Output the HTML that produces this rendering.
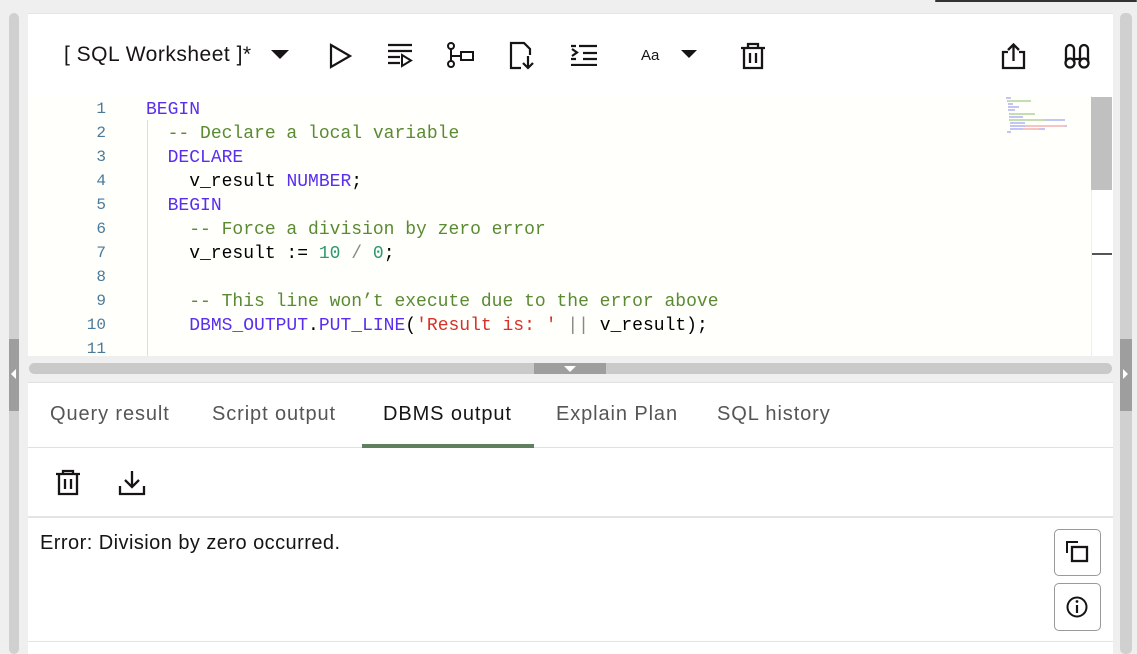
<!DOCTYPE html>
<html><head><meta charset="utf-8"><style>
*{margin:0;padding:0;box-sizing:border-box}
body{width:1137px;height:654px;background:#efefef;position:relative;overflow:hidden;font-family:"Liberation Sans",sans-serif}
.a{position:absolute}
.code{font-family:"Liberation Mono",monospace;font-size:18px;white-space:pre;color:#000}
.ln{font-family:"Liberation Mono",monospace;font-size:16px;color:#4a7a9a;width:30px;text-align:right;left:76px}
.k{color:#5a2df0}.c{color:#5a8a32}.n{color:#2e9a6e}.s{color:#d8302a}.o{color:#888}
.tab{top:403px;font-size:20px;color:#555;letter-spacing:0.9px}
svg{position:absolute}
</style></head><body>
<div class="a" style="left:935px;top:0;width:202px;height:2px;background:#333;border-radius:2px"></div>
<div class="a" style="left:9px;top:13px;width:10px;height:641px;background:#d0d0d0;border-radius:5px"></div>
<div class="a" style="left:9px;top:339px;width:10px;height:72px;background:#9e9e9e"></div>
<svg style="left:11px;top:369px" width="6" height="10"><path d="M5 0L0 5L5 10Z" fill="#fff"/></svg>
<div class="a" style="left:1120px;top:13px;width:12px;height:641px;background:#d0d0d0;border-radius:5px"></div>
<div class="a" style="left:1120px;top:339px;width:12px;height:72px;background:#9e9e9e"></div>
<svg style="left:1123px;top:369px" width="6" height="10"><path d="M0 0L5 5L0 10Z" fill="#fff"/></svg>
<div class="a" style="left:28px;top:13px;width:1085px;height:641px;background:#fff;border-top:1px solid #e4e4e4"></div>
<div class="a" style="left:64px;top:43px;font-size:21px;color:#161513;letter-spacing:0.5px">[ SQL Worksheet ]*</div>
<svg style="left:271px;top:50px" width="18" height="10"><path d="M0 0H18L9 9Z" fill="#161513"/></svg>
<svg style="left:329px;top:43px" width="24" height="26"><path d="M2 2L21 13L2 24Z" fill="none" stroke="#161513" stroke-width="2.2"/></svg>
<svg style="left:387px;top:42px" width="28" height="26"><path d="M1 3H25M1 9H25M1 15H13M1 21H13" stroke="#161513" stroke-width="2.3"/><path d="M15 13L24 18.5L15 24Z" fill="none" stroke="#161513" stroke-width="2"/></svg>
<svg style="left:446px;top:42px" width="30" height="28"><circle cx="5" cy="4" r="3" fill="none" stroke="#161513" stroke-width="2"/><circle cx="5" cy="22" r="3" fill="none" stroke="#161513" stroke-width="2"/><path d="M5 7V19M5 14H15" stroke="#161513" stroke-width="2"/><rect x="15" y="10" width="12" height="8" fill="none" stroke="#161513" stroke-width="2"/></svg>
<svg style="left:509px;top:41px" width="28" height="30"><path d="M12 27H2V2H15L21 8V14" fill="none" stroke="#161513" stroke-width="2.2"/><path d="M19 15V27M14 22L19 27L24 22" fill="none" stroke="#161513" stroke-width="2.2"/></svg>
<svg style="left:570px;top:44px" width="28" height="22"><path d="M9 2H27M13 9H27M13 15H27M1 21H27M1 2H6M1 15H6" stroke="#161513" stroke-width="2.3"/><path d="M2 5L7 8.5L2 12" fill="none" stroke="#161513" stroke-width="2.2"/></svg>
<div class="a" style="left:641px;top:47px;font-size:15px;color:#161513">Aa</div>
<svg style="left:681px;top:50px" width="16" height="9"><path d="M0 0H16L8 8Z" fill="#161513"/></svg>
<svg style="left:740px;top:42px" width="26" height="28"><path d="M1 6H25M8 6V2H18V6M4 6V26H22V6M10 11V21M16 11V21" fill="none" stroke="#161513" stroke-width="2.3"/></svg>
<svg style="left:1000px;top:42px" width="28" height="28"><path d="M8 10H3V26H24V10H19M13.5 19V3M8 8L13.5 2.5L19 8" fill="none" stroke="#161513" stroke-width="2.3"/></svg>
<svg style="left:1062px;top:42px" width="30" height="28"><path d="M4 20V7A4 4 0 0 1 12 7V20M18 20V7A4 4 0 0 1 26 7V20M12 17H18" fill="none" stroke="#161513" stroke-width="2.3"/><circle cx="8" cy="21" r="4.5" fill="none" stroke="#161513" stroke-width="2.3"/><circle cx="22" cy="21" r="4.5" fill="none" stroke="#161513" stroke-width="2.3"/></svg>
<div class="a" style="left:29px;top:96px;width:1062px;height:260px;background:#fffffc"></div>
<div class="a" style="left:147px;top:120px;width:1px;height:236px;background:#ddd"></div>
<div class="a" style="left:1091px;top:96px;width:21px;height:260px;background:#fff;border-left:1px solid #eee"></div>
<div class="a" style="left:1091px;top:97px;width:21px;height:93px;background:#c0c0c0"></div>
<div class="a" style="left:1092px;top:253px;width:20px;height:2px;background:#555"></div>
<svg style="left:1005px;top:97px" width="70" height="40"><g stroke-width="1"><path d="M1 1H6M2 4H10M3 7H8M3 10H14M3 13H10M4 17H26M4 20H18M4 23H60M5 26H20M5 29H62M5 32H40M2 35H6" stroke="#8888ee"/><path d="M3 4H26M5 17H30M5 23H40" stroke="#88bb66"/><path d="M20 29H60M18 32H34" stroke="#ee8888"/></g></svg>
<div class="a ln" style="top:100px">1</div><div class="a ln" style="top:124px">2</div><div class="a ln" style="top:148px">3</div><div class="a ln" style="top:172px">4</div><div class="a ln" style="top:196px">5</div><div class="a ln" style="top:220px">6</div><div class="a ln" style="top:244px">7</div><div class="a ln" style="top:268px">8</div><div class="a ln" style="top:292px">9</div><div class="a ln" style="top:316px">10</div><div class="a ln" style="top:340px;height:16px;overflow:hidden">11</div>
<div class="a code" style="left:146px;top:98px;line-height:24px"><span class="k">BEGIN</span>
  <span class="c">-- Declare a local variable</span>
  <span class="k">DECLARE</span>
    v_result <span class="k">NUMBER</span>;
  <span class="k">BEGIN</span>
    <span class="c">-- Force a division by zero error</span>
    v_result := <span class="n">10</span> <span class="o">/</span> <span class="n">0</span>;

    <span class="c">-- This line won’t execute due to the error above</span>
    <span class="k">DBMS_OUTPUT</span>.<span class="k">PUT_LINE</span>(<span class="s">'Result is: '</span> <span class="o">||</span> v_result);</div>
<div class="a" style="left:28px;top:356px;width:1085px;height:27px;background:#efefef;border-bottom:1px solid #e2e2e2"></div>
<div class="a" style="left:29px;top:363px;width:1083px;height:11px;background:#c9c9c9;border-radius:6px"></div>
<div class="a" style="left:534px;top:363px;width:72px;height:11px;background:#9e9e9e"></div>
<svg style="left:564px;top:366px" width="12" height="6"><path d="M0 0H12L6 6Z" fill="#fff"/></svg>
<div class="a tab" style="left:50px">Query result</div>
<div class="a tab" style="left:212px">Script output</div>
<div class="a tab" style="left:383px;color:#161513">DBMS output</div>
<div class="a tab" style="left:556px">Explain Plan</div>
<div class="a tab" style="left:717px">SQL history</div>
<div class="a" style="left:28px;top:447px;width:1085px;height:1px;background:#e0e0e0"></div>
<div class="a" style="left:362px;top:444px;width:172px;height:4px;background:#5f7f5f"></div>
<svg style="left:55px;top:469px" width="26" height="28"><path d="M1 5H25M8 5V2H18V5M4 5V25H22V5M10 10V20M16 10V20" fill="none" stroke="#161513" stroke-width="2.3"/></svg>
<svg style="left:118px;top:469px" width="28" height="28"><path d="M14 2V18M7 11L14 18L21 11M2 17V25H26V17" fill="none" stroke="#161513" stroke-width="2.3"/></svg>
<div class="a" style="left:28px;top:516px;width:1085px;height:2px;background:#e4e4e4"></div>
<div class="a" style="left:40px;top:532px;font-size:20px;color:#161513;letter-spacing:0.45px">Error: Division by zero occurred.</div>
<div class="a" style="left:1054px;top:529px;width:47px;height:47px;border:1px solid #999;border-radius:5px;background:#fff"></div>
<svg style="left:1066px;top:540px" width="24" height="24"><path d="M1 13V2H12" fill="none" stroke="#161513" stroke-width="2"/><rect x="6" y="7" width="15" height="14" fill="none" stroke="#161513" stroke-width="2.3"/></svg>
<div class="a" style="left:1054px;top:583px;width:47px;height:48px;border:1px solid #999;border-radius:5px;background:#fff"></div>
<svg style="left:1066px;top:596px" width="24" height="24"><circle cx="11" cy="11" r="9.5" fill="none" stroke="#161513" stroke-width="2"/><path d="M11 9V17" stroke="#161513" stroke-width="2.2"/><circle cx="11" cy="5.5" r="1.4" fill="#161513"/></svg>
<div class="a" style="left:28px;top:641px;width:1085px;height:1px;background:#e4e4e4"></div>
</body></html>
